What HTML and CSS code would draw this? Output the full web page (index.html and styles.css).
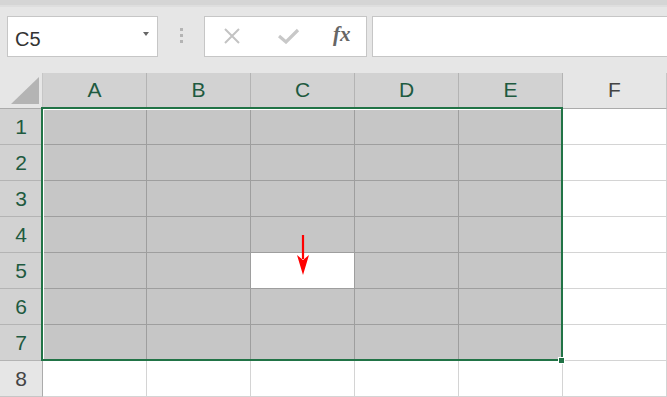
FILE: index.html
```html
<!DOCTYPE html>
<html lang="ja">
<head>
    <meta charset="UTF-8">
    <meta name="viewport" content="width=device-width, initial-scale=1.0">
    <title>Excel - C5</title>
    <link rel="stylesheet" href="styles.css">
</head>
<body>
    <div class="top-band"></div>

    <!-- Barra de fórmulas -->
    <div class="formula-bar">
        <div class="name-box">
            <span class="name-text">C5</span>
            <span class="drop-arrow"></span>
        </div>
        <div class="grip">
            <span></span><span></span><span></span>
        </div>
        <div class="fx-buttons">
            <svg class="btn-icon" width="18" height="16" viewBox="0 0 18 16">
                <path d="M2 1 L16 15 M16 1 L2 15" stroke="#c3c3c3" stroke-width="2" fill="none"/>
            </svg>
            <svg class="btn-icon" width="22" height="16" viewBox="0 0 22 16">
                <path d="M1 8 L8 14 L20 2" stroke="#c8c8c8" stroke-width="3.2" fill="none"/>
            </svg>
            <span class="fx">fx</span>
        </div>
        <div class="formula-input"></div>
    </div>

    <!-- Hoja -->
    <div class="sheet">
        <div class="corner">
            <svg width="42" height="35" viewBox="0 0 42 35">
                <polygon points="39,4 39,31 11,31" fill="#b4b4b4"/>
            </svg>
        </div>
        <div class="col-head sel">A</div>
        <div class="col-head sel">B</div>
        <div class="col-head sel">C</div>
        <div class="col-head sel">D</div>
        <div class="col-head sel">E</div>
        <div class="col-head">F</div>

        <div class="row-head sel">1</div>
        <div class="cell sel"></div><div class="cell sel"></div><div class="cell sel"></div><div class="cell sel"></div><div class="cell sel"></div><div class="cell"></div>

        <div class="row-head sel">2</div>
        <div class="cell sel"></div><div class="cell sel"></div><div class="cell sel"></div><div class="cell sel"></div><div class="cell sel"></div><div class="cell"></div>

        <div class="row-head sel">3</div>
        <div class="cell sel"></div><div class="cell sel"></div><div class="cell sel"></div><div class="cell sel"></div><div class="cell sel"></div><div class="cell"></div>

        <div class="row-head sel">4</div>
        <div class="cell sel"></div><div class="cell sel"></div><div class="cell sel"></div><div class="cell sel"></div><div class="cell sel"></div><div class="cell"></div>

        <div class="row-head sel">5</div>
        <div class="cell sel"></div><div class="cell sel"></div><div class="cell sel active"></div><div class="cell sel"></div><div class="cell sel"></div><div class="cell"></div>

        <div class="row-head sel">6</div>
        <div class="cell sel"></div><div class="cell sel"></div><div class="cell sel"></div><div class="cell sel"></div><div class="cell sel"></div><div class="cell"></div>

        <div class="row-head sel">7</div>
        <div class="cell sel"></div><div class="cell sel"></div><div class="cell sel"></div><div class="cell sel"></div><div class="cell sel"></div><div class="cell"></div>

        <div class="row-head">8</div>
        <div class="cell"></div><div class="cell"></div><div class="cell"></div><div class="cell"></div><div class="cell"></div><div class="cell"></div>

        <!-- Selección A1:E7 -->
        <div class="selection"></div>
        <div class="fill-handle"></div>

        <!-- Flecha roja -->
        <svg class="arrow" width="14" height="42" viewBox="0 0 14 42">
            <path d="M7 0 L7 24" stroke="#ff0000" stroke-width="2.2" fill="none"/>
            <path d="M1 20 L7 25 L13 20 L7 40 Z" fill="#ff0000"/>
        </svg>
    </div>
</body>
</html>
```

FILE: styles.css
```css
body {
    margin: 0;
    padding: 0;
    background-color: #e6e6e6;
    font-family: "Liberation Sans", Arial, sans-serif;
    width: 667px;
    height: 397px;
    overflow: hidden;
}

.top-band {
    height: 5px;
    background-color: #d5d5d5;
    border-bottom: 2px solid #dedede;
}

/* Barra de fórmulas */
.formula-bar {
    display: flex;
    padding: 9px 0 16px 7px;
    height: 41px;
}

.name-box {
    box-sizing: border-box;
    width: 151px;
    height: 41px;
    background-color: #fff;
    border: 1px solid #c6c6c6;
    display: flex;
    align-items: center;
    justify-content: space-between;
    padding: 0 8px 0 7px;
}

.name-text {
    font-size: 20px;
    color: #333;
    margin-top: 5px;
}

.drop-arrow {
    width: 0;
    height: 0;
    border-left: 3.5px solid transparent;
    border-right: 3.5px solid transparent;
    border-top: 4px solid #666;
    margin-top: -6px;
}

.grip {
    width: 46px;
    display: flex;
    flex-direction: column;
    align-items: center;
    justify-content: center;
    gap: 3px;
    margin-top: -2px;
}

.grip span {
    width: 3px;
    height: 3px;
    background-color: #b4b4b4;
}

.fx-buttons {
    box-sizing: border-box;
    width: 163px;
    height: 41px;
    background-color: #fff;
    border: 1px solid #c6c6c6;
    display: flex;
    align-items: center;
    padding: 0 0 0 18px;
}

.btn-icon {
    margin-top: -1px;
}

.btn-icon + .btn-icon {
    margin-left: 37px;
}

.fx {
    font-family: "Liberation Serif", "Times New Roman", serif;
    font-style: italic;
    font-weight: bold;
    font-size: 21px;
    color: #666;
    margin-left: 33px;
    margin-top: -4px;
}

.formula-input {
    flex: 1;
    height: 41px;
    box-sizing: border-box;
    margin-left: 5px;
    background-color: #fff;
    border: 1px solid #c6c6c6;
    border-right: none;
}

/* Hoja */
.sheet {
    position: relative;
    display: grid;
    grid-template-columns: 43px repeat(6, 104px);
    grid-template-rows: 36px repeat(8, 36px);
    background-color: #fff;
}

.corner,
.col-head,
.row-head,
.cell {
    box-sizing: border-box;
    border-right: 1px solid #d4d4d4;
    border-bottom: 1px solid #d4d4d4;
}

.corner {
    background-color: #e6e6e6;
    border-right-color: #c6c6c6;
    border-bottom-color: #ababab;
}

.corner svg {
    display: block;
}

.col-head,
.row-head {
    display: flex;
    align-items: center;
    justify-content: center;
    font-size: 21px;
    color: #444;
    background-color: #e6e6e6;
    border-right-color: #c6c6c6;
    border-bottom-color: #ababab;
}

.col-head {
    padding-bottom: 1px;
}

.row-head {
    border-bottom-color: #c6c6c6;
    border-right-color: #ababab;
}

.col-head.sel,
.row-head.sel {
    background-color: #d2d2d2;
    color: #1e5a40;
    border-right-color: #b4b4b4;
    border-bottom-color: #b4b4b4;
}

.cell.sel {
    background-color: #c6c6c6;
    border-right-color: #9e9e9e;
    border-bottom-color: #9e9e9e;
}

.cell.sel.active {
    background-color: #fff;
}

.selection {
    position: absolute;
    left: 41px;
    top: 34px;
    width: 522px;
    height: 254px;
    box-sizing: border-box;
    border: 2px solid #217346;
    box-shadow: inset 1px 1px 0 #fff;
    pointer-events: none;
}

.fill-handle {
    position: absolute;
    left: 558px;
    top: 284px;
    width: 5px;
    height: 5px;
    background-color: #217346;
    border: 1px solid #fff;
}

.arrow {
    position: absolute;
    left: 296px;
    top: 162px;
}
```
